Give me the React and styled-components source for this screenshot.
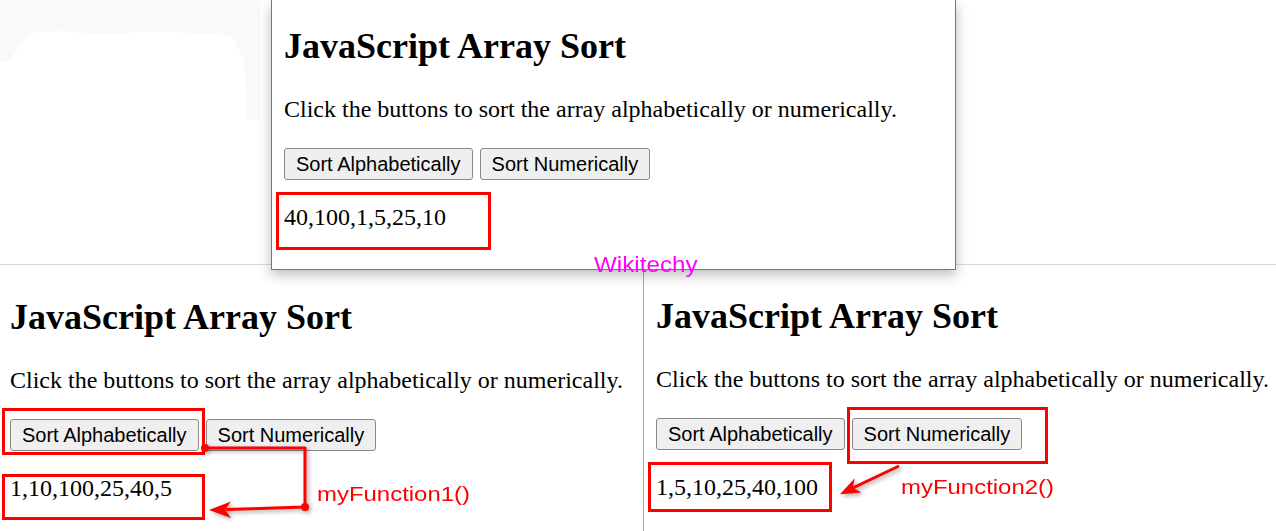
import React from 'react';
import styled, { createGlobalStyle } from 'styled-components';

const Global = createGlobalStyle`
  html, body { margin: 0; padding: 0; background: #fff; }
  body { width: 1276px; height: 531px; overflow: hidden; }
`;

const Page = styled.div`
  position: relative;
  width: 1276px;
  height: 531px;
  overflow: hidden;
  background: #fff;
  color: #000;
  font-family: "Liberation Serif", "Times New Roman", serif;
`;

const TopStrip = styled.div`
  display: flex;
  height: 265px;
  box-sizing: border-box;
  border-bottom: 1px solid #dadada;
`;

const Gutter = styled.div`
  flex: none;
  width: ${(p) => p.$w}px;
`;

const Smudge = styled.div`
  width: 260px;
  height: 120px;
  background: #f8f9fa;
  clip-path: polygon(0 0, 260px 0, 260px 120px, 247px 120px, 244px 60px, 232px 36px, 190px 33px, 150px 31px, 105px 35px, 62px 31px, 30px 33px, 18px 48px, 10px 60px, 0 62px);
`;

const Window = styled.div`
  position: relative;
  z-index: 2;
  flex: none;
  width: 685px;
  height: 270px;
  box-sizing: border-box;
  padding: 26px 0 0 12px;
  background: #fff;
  border: 1px solid #777;
  border-top: none;
  box-shadow: 0 5px 12px rgba(0, 0, 0, 0.26);
`;

const Bottom = styled.div`
  display: grid;
  grid-template-columns: 643px 1fr;
  height: 266px;
`;

const Pane = styled.div`
  position: relative;
  padding: ${(p) => p.$top}px 0 0 ${(p) => p.$left}px;
  border-left: ${(p) => (p.$divider ? '1px solid #a6a6a6' : 'none')};
`;

const Title = styled.h1`
  margin: 0;
  font: 700 36px/40px "Liberation Serif", "Times New Roman", serif;
  white-space: nowrap;
`;

const Intro = styled.p`
  margin: 29px 0 0;
  font-size: 24px;
  line-height: 28px;
  white-space: nowrap;
`;

const Buttons = styled.div`
  position: relative;
  display: flex;
  gap: 7px;
  margin-top: 25px;
`;

const Btn = styled.button`
  height: 32px;
  padding: 0 11px;
  font: 20px "Liberation Sans", Arial, sans-serif;
  color: #000;
  background: #efefef;
  border: 1px solid #8a8a8a;
  border-radius: 3px;
  white-space: nowrap;
`;

const Output = styled.div`
  position: relative;
  margin-top: 23px;
  font-size: 24px;
  line-height: 28px;
  white-space: nowrap;
`;

const Mark = styled.div`
  position: absolute;
  left: ${(p) => p.$x}px;
  top: ${(p) => p.$y}px;
  width: ${(p) => p.$w}px;
  height: ${(p) => p.$h}px;
  box-sizing: border-box;
  border: 3px solid #ff0000;
  pointer-events: none;
`;

const Overlay = styled.svg`
  position: absolute;
  left: 0;
  top: 0;
  z-index: 4;
  pointer-events: none;
  filter: drop-shadow(2px 2px 2px rgba(0, 0, 0, 0.35));
`;

const Label = styled.div`
  position: absolute;
  z-index: 5;
  left: ${(p) => p.$x}px;
  top: ${(p) => p.$y}px;
  font: ${(p) => p.$size}px/${(p) => p.$size + 3}px "Liberation Sans", Arial, sans-serif;
  color: ${(p) => p.$color};
  transform: scaleX(${(p) => p.$stretch});
  transform-origin: left center;
  white-space: nowrap;
`;

function Demo({ result, btnMark, outMark }) {
  return (
    <>
      <Title>JavaScript Array Sort</Title>
      <Intro>Click the buttons to sort the array alphabetically or numerically.</Intro>
      <Buttons>
        <Btn>Sort Alphabetically</Btn>
        <Btn>Sort Numerically</Btn>
        {btnMark && <Mark $x={btnMark[0]} $y={btnMark[1]} $w={btnMark[2]} $h={btnMark[3]} />}
      </Buttons>
      <Output>
        {result}
        {outMark && <Mark $x={outMark[0]} $y={outMark[1]} $w={outMark[2]} $h={outMark[3]} />}
      </Output>
    </>
  );
}

export default function App() {
  return (
    <Page>
      <Global />
      <TopStrip>
        <Gutter $w={271}>
          <Smudge />
        </Gutter>
        <Window>
          <Demo result="40,100,1,5,25,10" outMark={[-8, -11, 215, 58]} />
        </Window>
      </TopStrip>
      <Bottom>
        <Pane $top={32} $left={10}>
          <Demo
            result="1,10,100,25,40,5"
            btnMark={[-8, -11, 203, 47]}
            outMark={[-8, 0, 203, 46]}
          />
        </Pane>
        <Pane $top={31} $left={12} $divider>
          <Demo
            result="1,5,10,25,40,100"
            btnMark={[191, -11, 201, 57]}
            outMark={[-8, -11, 184, 50]}
          />
        </Pane>
      </Bottom>

      <Overlay width="1276" height="531" viewBox="0 0 1276 531">
        <g fill="none" stroke="#ff0000" strokeWidth="3" strokeLinejoin="round">
          <polyline points="205,448 305,448 305,507 226,509.5" />
          <line x1="899" y1="466" x2="852" y2="488.3" />
        </g>
        <g fill="#ff0000">
          <circle cx="205" cy="448" r="4" />
          <circle cx="305" cy="507" r="4" />
          <polygon points="209,510 231,501.5 225,509.7 231,518" />
          <polygon points="840,494.3 854.7,478.2 852.7,488 861.5,492.6" />
        </g>
      </Overlay>

      <Label $x={594} $y={252} $size={22} $stretch={1.1} $color="#ff00ff">Wikitechy</Label>
      <Label $x={317} $y={482} $size={21} $stretch={1.14} $color="#ff0000">myFunction1()</Label>
      <Label $x={901} $y={475} $size={21} $stretch={1.14} $color="#ff0000">myFunction2()</Label>
    </Page>
  );
}
